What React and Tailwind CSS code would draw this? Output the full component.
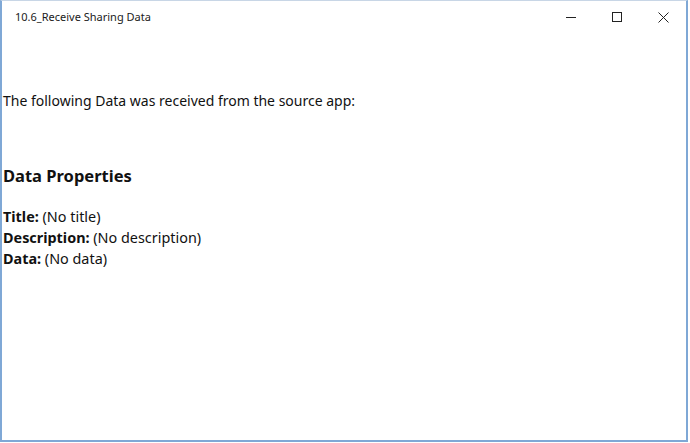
export default function App() {
  return (
    <div className="w-[690px] h-[443px] bg-white relative overflow-hidden" style={{ fontFamily: '"Noto Sans", "Open Sans", sans-serif' }}>
      <div className="w-[688px] h-[442px] border-2 border-t border-[#7fa8d6] border-t-[#c8d6e6] flex flex-col bg-white">
        <div className="h-[32px] flex items-center shrink-0">
          <div className="pl-[13px] text-[11px] text-[#1a1a1a] flex-1">10.6_Receive Sharing Data</div>
          <div className="w-[46px] h-[32px] flex items-center justify-center">
            <svg width="10" height="10" viewBox="0 0 10 10"><path d="M0 5.5H10" stroke="#222" strokeWidth="1" /></svg>
          </div>
          <div className="w-[46px] h-[32px] flex items-center justify-center">
            <svg width="10" height="10" viewBox="0 0 10 10"><rect x="0.5" y="0.5" width="9" height="9" fill="none" stroke="#222" strokeWidth="1" /></svg>
          </div>
          <div className="w-[46px] h-[32px] flex items-center justify-center">
            <svg width="11" height="11" viewBox="0 0 11 11"><path d="M0.5 0.5L10.5 10.5M10.5 0.5L0.5 10.5" stroke="#222" strokeWidth="1" /></svg>
          </div>
        </div>
        <div className="pl-[1px] text-[#111] text-[14px]">
          <div className="mt-[58px] leading-[20px]">The following Data was received from the source app:</div>
          <div className="mt-[53px] text-[16.5px] font-bold leading-[24px]">Data Properties</div>
          <div className="mt-[18px] leading-[21px] text-[14.4px]">
            <div><span className="font-bold">Title:</span> (No title)</div>
            <div><span className="font-bold">Description:</span> (No description)</div>
            <div><span className="font-bold">Data:</span> (No data)</div>
          </div>
        </div>
      </div>
    </div>
  );
}
